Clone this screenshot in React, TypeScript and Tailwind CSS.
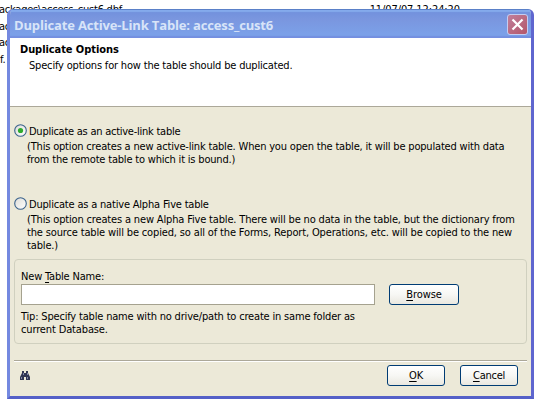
import type { ReactNode } from "react";

function Line({ children, className = "" }: { children: ReactNode; className?: string }) {
  return <div className={`h-[13px] w-max whitespace-pre ${className}`}>{children}</div>;
}

function Radio({ checked = false }: { checked?: boolean }) {
  return (
    <svg width="13" height="13" viewBox="0 0 13 13" className="mb-[2px] shrink-0">
      <defs>
        <linearGradient id="well" x1="0" y1="0" x2="1" y2="1">
          <stop offset="0" stopColor="#dcdcd7" />
          <stop offset="1" stopColor="#ffffff" />
        </linearGradient>
      </defs>
      <circle cx="6.5" cy="6.5" r="5.8" fill="url(#well)" stroke="#3a628c" strokeWidth="1.1" />
      {checked && <circle cx="6.5" cy="6.5" r="2.6" fill="#2eab2e" />}
    </svg>
  );
}

function Button({ children, className = "" }: { children: ReactNode; className?: string }) {
  return (
    <button
      className={`flex h-[21px] items-center justify-center rounded-[3px] border border-[#003c74] bg-linear-to-b from-white via-[#f7f7f4] to-[#eae8e0] ${className}`}
    >
      {children}
    </button>
  );
}

function Key({ children }: { children: ReactNode }) {
  return <span className="underline underline-offset-2">{children}</span>;
}

export default function App() {
  return (
    <div className="relative h-[405px] w-[541px] overflow-hidden bg-white font-['DejaVu_Sans_Condensed','DejaVu_Sans',sans-serif] text-[11px] leading-[13px] text-black">
      <div className="flex h-[18px] justify-between pt-[3px] pr-[81px]">
        <Line className="-ml-px tracking-[-0.23px]">ackages\access_cust6.dbf</Line>
        <Line className="tracking-[-0.1px]">11/07/07 12:24:20</Line>
      </div>
      <Line className="mt-[2px] -ml-px tracking-[-0.25px]">ac</Line>
      <Line className="mt-[3px] -ml-px tracking-[-0.25px]">ac</Line>
      <Line className="mt-[4px] tracking-[-0.25px]">f.</Line>

      <div className="absolute top-[9px] left-[7px] flex h-[390px] w-[527px] flex-col overflow-hidden rounded-t-[6px] border-x-[3px] border-b-[3px] border-r-[#5f66cf] border-b-[#5560c8] border-l-[#7489e0] bg-[#ece9d8]">
        <div className="-mx-[3px] flex h-[29px] shrink-0 items-center justify-between bg-linear-to-b from-[#6f8fdc] from-0% via-[#7a96df] via-35% to-[#7ba0e8] to-85% pr-[6px] pl-[7px] shadow-[inset_0_1px_0_#5a80c8,inset_0_3px_1px_#84aaec,inset_0_-2px_1px_#748fe0]">
          <span className="mt-[3px] font-['Open_Sans',sans-serif] text-[13px] font-bold tracking-[-0.16px] whitespace-pre text-[#d8e4f8]">
            Duplicate Active-Link Table: access_cust6
          </span>
          <span className="mt-[2px] flex size-[21px] items-center justify-center rounded-[3px] border border-[#c3cdf2] bg-linear-to-br from-[#c07f9c] to-[#b3566a]">
            <svg width="13" height="13" viewBox="0 0 13 13" stroke="#fff" strokeWidth="2.2">
              <path d="M1.5 1.5 11.5 11.5M11.5 1.5 1.5 11.5" />
            </svg>
          </span>
        </div>

        <div className="h-[69px] shrink-0 border-b border-[#aca899] bg-white pt-[5px] pl-[10px]">
          <Line className="font-bold tracking-[-0.07px]">Duplicate Options</Line>
          <Line className="mt-[3px] ml-[9px] tracking-[-0.18px]">Specify options for how the table should be duplicated.</Line>
        </div>

        <div className="flex grow flex-col pt-[17px] pr-[4px] pl-[4px]">
          <div className="flex h-[15px] items-center gap-[2px]">
            <Radio checked />
            <Line className="tracking-[-0.25px]">Duplicate as an active-link table</Line>
          </div>
          <div className="h-[58px] pt-[1px] pl-[13px]">
            <Line className="tracking-[-0.18px]">(This option creates a new active-link table. When you open the table, it will be populated with data</Line>
            <Line className="tracking-[-0.19px]">from the remote table to which it is bound.)</Line>
          </div>
          <div className="flex h-[15px] items-center gap-[2px]">
            <Radio />
            <Line className="tracking-[-0.19px]">Duplicate as a native Alpha Five table</Line>
          </div>
          <div className="h-[47px] pt-[1px] pl-[13px]">
            <Line className="tracking-[-0.16px]">(This option creates a new Alpha Five table. There will be no data in the table, but the dictionary from</Line>
            <Line className="tracking-[-0.15px]">the source table will be copied, so all of the Forms, Report, Operations, etc. will be copied to the new</Line>
            <Line className="tracking-[-0.15px]">table.)</Line>
          </div>

          <div className="h-[85px] shrink-0 rounded-[4px] border border-[#d0d0bf] pt-[10px] pl-[6px]">
            <Line className="tracking-[-0.18px]">
              New <Key>T</Key>able Name:
            </Line>
            <div className="mt-px flex gap-[14px]">
              <input className="h-[21px] w-[354px] border border-[#a5a28f] bg-white outline-none" />
              <Button className="w-[70px] tracking-[-0.1px]">
                <span><Key>B</Key>rowse</span>
              </Button>
            </div>
            <div className="mt-[5px]">
              <Line className="tracking-[-0.18px]">Tip: Specify table name with no drive/path to create in same folder as</Line>
              <Line className="tracking-[-0.14px]">current Database.</Line>
            </div>
          </div>

          <div className="mt-[16px] h-[2px] border-t border-b border-t-[#aca899] border-b-white" />
          <div className="flex pt-[3px] pr-[9px] pl-[6px]">
            <svg width="10" height="10" viewBox="0 0 10 10" className="mt-[6px] mr-auto" fill="#303553">
              <path d="M2 0h2v2h2V0h2v2l2 4v3H6V6H4v3H0V6l2-4z" />
              <path d="M1 6h1v2H1zM7 6h1v2H7zM3 2h1v2H3zM7 2h1v2H7z" fill="#7f86a8" />
            </svg>
            <Button className="w-[58px]">
              <span className="tracking-[-0.25px]"><Key>O</Key>K</span>
            </Button>
            <Button className="ml-[15px] w-[58px]">
              <span className="tracking-[-0.25px]"><Key>C</Key>ancel</span>
            </Button>
          </div>
        </div>
      </div>
    </div>
  );
}
